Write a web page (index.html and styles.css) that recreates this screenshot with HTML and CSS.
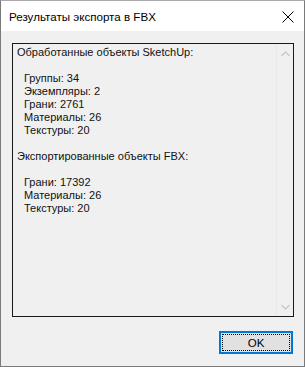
FILE: index.html
```html
<!DOCTYPE html>
<html lang="ru">
<head>
    <meta charset="UTF-8">
    <title>Результаты экспорта в FBX</title>
    <link rel="stylesheet" href="styles.css">
</head>
<body>
    <div class="window">
        <div class="titlebar">
            <span class="title">Результаты экспорта в FBX</span>
            <span class="close">
                <svg width="12" height="12" viewBox="0 0 12 12"><path d="M0.5 0.5 L11.5 11.5 M11.5 0.5 L0.5 11.5" stroke="#000" stroke-width="1" fill="none"/></svg>
            </span>
        </div>
        <div class="content">
            <div class="report">
                <div class="report-text">
                    <div class="line">Обработанные объекты SketchUp:</div>
                    <div class="line">&nbsp;</div>
                    <div class="line indent">Группы: 34</div>
                    <div class="line indent">Экземпляры: 2</div>
                    <div class="line indent">Грани: 2761</div>
                    <div class="line indent">Материалы: 26</div>
                    <div class="line indent">Текстуры: 20</div>
                    <div class="line">&nbsp;</div>
                    <div class="line">Экспортированные объекты FBX:</div>
                    <div class="line">&nbsp;</div>
                    <div class="line indent">Грани: 17392</div>
                    <div class="line indent">Материалы: 26</div>
                    <div class="line indent">Текстуры: 20</div>
                </div>
                <div class="scrollbar">
                    <svg width="9" height="6" viewBox="0 0 9 6"><path d="M0.5 5 L4.5 1 L8.5 5" stroke="#c8c8c8" stroke-width="1.3" fill="none"/></svg>
                    <svg width="9" height="6" viewBox="0 0 9 6"><path d="M0.5 1 L4.5 5 L8.5 1" stroke="#c8c8c8" stroke-width="1.3" fill="none"/></svg>
                </div>
            </div>
            <div class="buttons">
                <button class="ok-btn"><span class="focus">OK</span></button>
            </div>
        </div>
    </div>
</body>
</html>
```

FILE: styles.css
```css
* {
    box-sizing: border-box;
    margin: 0;
    padding: 0;
}

body {
    font-family: "Liberation Sans", Arial, sans-serif;
    font-size: 11px;
    color: #000;
    background: #fff;
}

.window {
    width: 305px;
    height: 367px;
    border: 1px solid #7a7a7a;
    border-top-color: #aaaaaa;
    display: flex;
    flex-direction: column;
}

.titlebar {
    height: 30px;
    background: #fff;
    display: flex;
    align-items: center;
    justify-content: space-between;
    padding: 0 10px 0 8px;
    flex-shrink: 0;
}

.title {
    font-size: 11.6px;
    padding-top: 1px;
}

.close {
    display: flex;
    padding-top: 2px;
}

.content {
    flex: 1;
    background: #f0f0f0;
    padding: 12px 10px 0 11px;
    display: flex;
    flex-direction: column;
}

.report {
    height: 274px;
    border: 1px solid #1a1a1a;
    display: flex;
    background: #f0f0f0;
}

.report-text {
    flex: 1;
    padding: 2px 0 0 4px;
    color: #111;
}

.line {
    height: 13px;
    line-height: 13px;
    white-space: nowrap;
}

.indent {
    padding-left: 7px;
}

.scrollbar {
    width: 17px;
    border-left: 1px solid #e8e8e8;
    display: flex;
    flex-direction: column;
    justify-content: space-between;
    align-items: center;
    padding: 7px 0 6px;
}

.buttons {
    display: flex;
    justify-content: flex-end;
    padding: 14px 1px 0 0;
}

.ok-btn {
    width: 74px;
    height: 23px;
    background: #e1e1e1;
    border: 2px solid #0078d7;
    font-family: inherit;
    font-size: 11.5px;
    color: #000;
    padding: 1px;
    display: flex;
}

.focus {
    flex: 1;
    border: 1px dotted #000;
    display: flex;
    align-items: center;
    justify-content: center;
}
```
